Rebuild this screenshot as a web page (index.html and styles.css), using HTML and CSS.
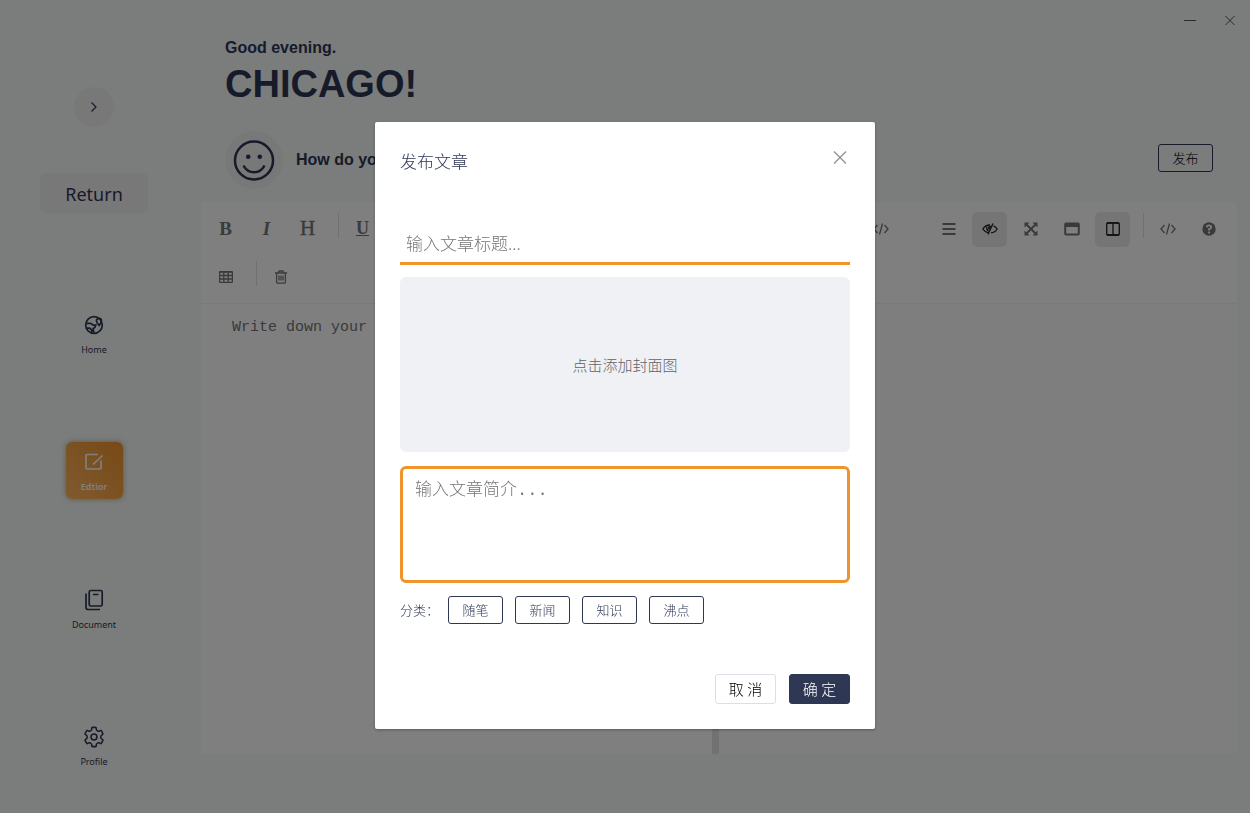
FILE: index.html
```html
<!DOCTYPE html>
<html lang="zh-CN">
<head>
<meta charset="utf-8">
<title>Editor</title>
<link rel="stylesheet" href="styles.css">
</head>
<body>
<div class="app">
  <aside class="sidebar">
    <button class="collapse" aria-label="Expand"><svg width="8" height="12" viewBox="0 0 8 12"><path d="M1.500 1.500L6 6L1.500 10.500"/></svg></button>
    <button class="return">Return</button>
    <nav class="nav">
      <a class="nav-item" href="#home">
        <svg width="20" height="20" viewBox="0 0 20 20"><circle cx="10" cy="10" r="8.300"/><path d="M2 8.300h4.800l2.400 1.900h2.600l-.9 2.300-1.700 1 .6 4.200M2.200 13.200h3.500l2 1.800.2 2.500"/><path d="M15.200 10.500Q12.400 7.500 12.400 5.800A2.500 2.500 0 0 1 17.400 5.800Q17.400 7.500 15.200 10.500z"/></svg>
        <span>Home</span>
      </a>
      <a class="nav-item active" href="#editor">
        <svg width="20" height="20" viewBox="0 0 20 20"><path d="M14 2.500H3.200Q2 2.500 2 3.700v12.100Q2 17 3.200 17h12.600q1.200 0 1.200-1.200V8.500M9 12.500L18.500 3.500"/></svg>
        <span>Edtior</span>
      </a>
      <a class="nav-item" href="#document">
        <svg class="tall" width="20" height="22" viewBox="0 0 20 22"><rect x="5.200" y="1.500" width="13" height="15.500" rx="1.500"/><path d="M9 5.500h5.500M2 4.500v13.500q0 2.500 2 2.500h12"/></svg>
        <span>Document</span>
      </a>
      <a class="nav-item" href="#profile">
        <svg class="tall" width="22" height="22" viewBox="0 0 24 24"><circle cx="12" cy="12" r="3.200"/><path d="M9.500 2.500Q9.500 1.500 10.500 1.500h3q1 0 1 1v1q0 1 1 1.600l.6.4q1 .5 1.800 0l.8-.5q.9-.5 1.400.4l1.500 2.600q.5.900-.4 1.400l-.8.500q-.9.600-.9 1.600v1q0 1 .9 1.600l.8.500q.9.500.4 1.400l-1.500 2.600q-.5.900-1.400.4l-.8-.5q-.8-.5-1.800 0l-.6.400q-1 .6-1 1.600v1q0 1-1 1h-3q-1 0-1-1v-1q0-1-1-1.600l-.6-.4q-1-.5-1.800 0l-.8.500q-.9.500-1.400-.4l-1.500-2.600q-.5-.9.400-1.400l.8-.5q.9-.6.9-1.600v-1q0-1-.9-1.600l-.8-.5q-.9-.5-.4-1.400l1.500-2.600q.5-.9 1.400-.4l.8.500q.8.500 1.800 0l.6-.4q1-.6 1-1.600z"/></svg>
        <span>Profile</span>
      </a>
    </nav>
  </aside>

  <main class="main">
    <div class="window-bar">
      <button aria-label="Minimize"><svg width="12" height="12" viewBox="0 0 12 12"><path d="M0 6.500h12"/></svg></button>
      <button aria-label="Close window"><svg width="12" height="12" viewBox="0 0 12 12"><path d="M1.500 2l9 9M10.500 2l-9 9"/></svg></button>
    </div>
    <header class="greeting">
      <p>Good evening.</p>
      <h1>CHICAGO!</h1>
    </header>
    <div class="mood">
      <span class="face"><svg width="42" height="42" viewBox="0 0 42 42"><circle cx="21" cy="21.500" r="19"/><circle class="dot" cx="15.200" cy="17.800" r="2.300"/><circle class="dot" cx="26.800" cy="17.800" r="2.300"/><path d="M10.500 26.500C15 35.500 27 35.500 31.500 26.500"/></svg></span>
      <h2>How do yo</h2>
      <button class="tag publish">发布</button>
    </div>

    <section class="editor">
      <div class="toolbar">
        <div class="tool-row">
          <button class="tool bold">B</button>
          <button class="tool italic">I</button>
          <button class="tool heading">H</button>
          <span class="divider"></span>
          <button class="tool underline">U</button>
          <button class="tool push" aria-label="Code"><svg width="16" height="12" viewBox="0 0 16 12"><path d="M4.500 2L1 6l3.500 4M11.500 2L15 6l-3.500 4M9.500 0.500L6.500 11.500"/></svg></button>
          <div class="tool-group">
            <button class="tool" aria-label="Outline"><svg width="14" height="12" viewBox="0 0 14 12"><path class="thick" d="M0.500 1h13M0.500 6h13M0.500 11h13"/></svg></button>
            <button class="tool on" aria-label="Preview"><svg width="16" height="12" viewBox="0 0 16 12"><path d="M6.500 9.800C4 9.300 2 8 0.800 6 2.500 3.300 5 2 8 2M11.500 2.800C13.200 3.500 14.400 4.700 15.200 6 13.800 8.300 11.500 9.700 9 9.900M11 0.500L6 11.500M4.800 4Q4.500 7 6.500 8"/><path class="solid" d="M6.200 3.500L9.300 2.500 7.300 7Q5.500 6 6.200 3.500z"/></svg></button>
            <button class="tool" aria-label="Fullscreen"><svg width="14" height="14" viewBox="0 0 14 14"><path class="thick" d="M2 2l10 10M12 2L2 12"/><path class="solid" d="M0.500 0.500H5.500L0.500 5.500zM13.500 0.500V5.500L8.500 0.500zM0.500 13.500V8.500L5.500 13.500zM13.500 13.500H8.500L13.500 8.500z"/></svg></button>
            <button class="tool" aria-label="Read"><svg width="16" height="14" viewBox="0 0 16 14"><rect class="thick" x="1.200" y="1.500" width="13.600" height="11" rx="0.800"/><path class="solid" d="M1 1h14v4H1z"/></svg></button>
            <button class="tool on" aria-label="Split view"><svg width="14" height="14" viewBox="0 0 14 14"><rect x="0.700" y="1" width="12.600" height="12" rx="1"/><path d="M7 1v12M1 1h12M1 13h12"/></svg></button>
            <span class="divider"></span>
            <button class="tool" aria-label="HTML source"><svg width="16" height="12" viewBox="0 0 16 12"><path d="M4.500 2L1 6l3.500 4M11.500 2L15 6l-3.500 4M9.500 0.500L6.500 11.500"/></svg></button>
            <button class="tool" aria-label="Help"><svg width="14" height="14" viewBox="0 0 14 14"><circle class="solid" cx="7" cy="7" r="6.700"/><path class="mark" d="M4.800 5.300Q5 3.300 7 3.300t2.200 1.900Q9.200 6.500 7.100 7.200V8.500M7.100 9.500v2"/></svg></button>
          </div>
        </div>
        <div class="tool-row">
          <button class="tool" aria-label="Table"><svg width="14" height="12" viewBox="0 0 14 12"><rect x="0.600" y="0.600" width="12.800" height="10.800" rx="1"/><path d="M0.500 1h13M0.500 4.500h13M0.500 8h13M4.800 1v10M9.200 1v10"/></svg></button>
          <span class="divider"></span>
          <button class="tool" aria-label="Delete"><svg width="12" height="14" viewBox="0 0 12 14"><path d="M0 3h12M3.500 3V2Q3.500 1 4.500 1h3q1 0 1 1v1M1.600 3v9q0 1.200 1.200 1.200h6.400q1.200 0 1.200-1.200V3M4 5.500v5M6 5.500v5M8 5.500v5"/></svg></button>
        </div>
      </div>
      <div class="panes">
        <textarea class="source" aria-label="Article body" placeholder="Write down your"></textarea>
        <div class="preview"></div>
      </div>
    </section>
  </main>
</div>

<div class="overlay">
  <form class="dialog" role="dialog" aria-labelledby="dialog-title">
    <header class="dialog-head">
      <h2 id="dialog-title">发布文章</h2>
      <button type="button" class="close" aria-label="Close"><svg width="14" height="14" viewBox="0 0 14 14"><path d="M1 1.500l12 12M13 1.500L1 13.500"/></svg></button>
    </header>
    <input class="title-input" type="text" aria-label="文章标题" placeholder="输入文章标题...">
    <button type="button" class="cover">点击添加封面图</button>
    <textarea class="summary" aria-label="文章简介" placeholder="输入文章简介..."></textarea>
    <div class="tags">
      <span class="tags-label">分类：</span>
      <button type="button" class="tag">随笔</button>
      <button type="button" class="tag">新闻</button>
      <button type="button" class="tag">知识</button>
      <button type="button" class="tag">沸点</button>
    </div>
    <footer class="actions">
      <button type="button" class="action">取 消</button>
      <button type="submit" class="action primary">确 定</button>
    </footer>
  </form>
</div>
</body>
</html>
```
FILE: styles.css
```css
:root {
  --navy: #2e3753;
  --orange: #f0932b;
  --sans: "Liberation Sans", "Noto Sans CJK SC", sans-serif;
  --ui: "Noto Sans", "Noto Sans CJK SC", sans-serif;
  --cjk: "Noto Sans CJK SC", sans-serif;
}

* { box-sizing: border-box; }

body {
  margin: 0;
  font-family: var(--sans);
  color: var(--navy);
  background: #f5faf8;
}

h1, h2, p { margin: 0; }

button {
  padding: 0;
  border: 0;
  background: none;
  color: inherit;
  font: inherit;
}

svg {
  display: block;
  fill: none;
  stroke: currentColor;
}

textarea { resize: none; }
input:focus, textarea:focus { outline: none; }

.app {
  display: flex;
  height: 100vh;
  overflow: hidden;
}

/* Sidebar */
.sidebar {
  display: flex;
  flex-direction: column;
  align-items: center;
  flex: none;
  width: 188px;
  padding-top: 87px;
  font-family: var(--ui);
}

.collapse {
  display: grid;
  place-items: center;
  width: 40px;
  height: 40px;
  border-radius: 50%;
  background: #f3f0f2;
}

.collapse svg { stroke-width: 1.2; }

.return {
  width: 108px;
  height: 40px;
  margin-top: 46px;
  padding-top: 2px;
  border-radius: 5px;
  background: #f3f0f2;
  font-size: 18px;
}

.nav {
  display: flex;
  flex-direction: column;
  gap: 80px;
  margin-top: 92px;
}

.nav-item {
  display: flex;
  flex-direction: column;
  align-items: center;
  gap: 9px;
  width: 57px;
  height: 57px;
  padding-top: 10px;
  border-radius: 6px;
  color: var(--navy);
  font-size: 9px;
  line-height: 12px;
  text-decoration: none;
}

.nav-item svg { stroke-width: 1.7; }
.nav-item .tall { margin-bottom: -1px; }

.nav-item.active {
  background: linear-gradient(225deg, #f0932b, #ffb560);
  box-shadow: 0 0 5px rgba(120, 80, 20, .5);
  color: #fff;
  font-weight: 600;
}

/* Main column */
.main {
  display: flex;
  flex-direction: column;
  flex: 1;
  min-width: 0;
  padding: 0 13px 59px;
}

.window-bar {
  display: flex;
  justify-content: flex-end;
  gap: 28px;
  height: 38px;
  padding-top: 14px;
  color: #555;
}

.window-bar button { height: 12px; }
.window-bar button:last-child { margin-right: 1px; }

.greeting { padding-left: 24px; }

.greeting p {
  font-size: 16px;
  font-weight: 700;
  line-height: 20px;
}

.greeting h1 {
  font-size: 38px;
  line-height: 52px;
}

.mood {
  display: flex;
  align-items: center;
  height: 58px;
  margin: 21px 24px 13px;
}

.mood h2 {
  margin-left: 13px;
  font-size: 16px;
}

.face {
  display: grid;
  place-items: center;
  width: 58px;
  height: 58px;
  border-radius: 50%;
  background: #f3f0f2;
}

.face svg { stroke-width: 2.5; }
.face .dot { fill: currentColor; stroke: none; }

.tag {
  width: 55px;
  height: 28px;
  border: 1px solid var(--navy);
  border-radius: 3px;
  font-family: var(--cjk);
  font-size: 13px;
  font-weight: 300;
  line-height: 20px;
}

.publish {
  margin-bottom: 4px;
  margin-left: auto;
  color: #000;
}

/* Editor */
.editor {
  display: flex;
  flex-direction: column;
  flex: 1;
  min-height: 0;
  overflow: hidden;
  border-radius: 4px;
  background: #fff;
}

.toolbar {
  display: flex;
  flex-direction: column;
  gap: 13px;
  padding: 10px 11px 8px 7px;
  border-bottom: 1px solid #f2f2f2;
  color: #757575;
}

.tool-row, .tool-group {
  display: flex;
  gap: 6px;
}

.tool-group { margin-left: 27px; }

.tool {
  display: grid;
  place-items: center;
  width: 35px;
  height: 35px;
  padding-bottom: 1px;
  border-radius: 5px;
  font-family: "Liberation Serif", serif;
  font-size: 19px;
}

.tool svg { stroke-width: 1.3; }
.tool .thick { stroke-width: 2; }
.tool .solid { fill: currentColor; stroke: none; }
.tool .mark { stroke: #fff; stroke-width: 1.8; }
.tool.push { margin-left: auto; }
.tool.bold, .tool.italic { font-weight: 700; }
.tool.italic { font-style: italic; }
.tool.heading { font-size: 21px; -webkit-text-stroke: 0.4px; padding-bottom: 3px; }
.tool.underline { text-decoration: underline; font-size: 18px; font-weight: 700; padding-bottom: 3px; }

.tool.on {
  background: #eaeaea;
  color: #222;
}

.divider {
  width: 1px;
  height: 25px;
  margin: 1px 0 0 7px;
  background: #e0e0e0;
}

.panes {
  display: grid;
  grid-template-columns: 1fr 1fr;
  flex: 1;
}

.source {
  width: 100%;
  height: 100%;
  padding: 13px 31px;
  border: 0;
  border-right: 7px solid #e4e4e4;
  background: none;
  font-family: "Liberation Mono", monospace;
  font-size: 15px;
  line-height: 22px;
}

.preview { background: #fdfdfd; }

::placeholder {
  color: #757575;
  opacity: 1;
}

/* Publish dialog */
.overlay {
  position: fixed;
  inset: 0;
  display: flex;
  justify-content: center;
  align-items: flex-start;
  padding-top: 15vh;
  background: rgba(0, 0, 0, .5);
}

.dialog {
  display: flex;
  flex-direction: column;
  width: 500px;
  padding: 25px;
  border-radius: 2px;
  background: #fff;
  box-shadow: 0 1px 3px rgba(0, 0, 0, .3);
  font-family: var(--cjk);
  font-weight: 300;
}

.dialog-head {
  display: flex;
  justify-content: space-between;
  align-items: flex-start;
  margin-bottom: 48px;
}

.dialog-head h2 {
  font-size: 17px;
  font-weight: 300;
  line-height: 28px;
}

.close {
  padding: 3px;
  color: #909399;
}

.close svg { stroke-width: 1.4; }

.title-input {
  height: 42px;
  margin-bottom: 12px;
  padding: 0 6px;
  border: 0;
  border-bottom: 3px solid var(--orange);
  font: 300 17px/24px var(--cjk);
}

.cover {
  height: 175px;
  margin-bottom: 14px;
  border-radius: 6px;
  background: #f0f1f5;
  color: #606266;
  font-size: 15px;
}

.summary {
  height: 117px;
  margin-bottom: 13px;
  padding: 10px 12px;
  border: 3px solid var(--orange);
  border-radius: 6px;
  font: 300 17px/24px "Liberation Mono", "Noto Sans CJK SC", monospace;
}

.tags {
  display: flex;
  align-items: center;
  gap: 12px;
  margin-bottom: 50px;
}

.tags-label {
  width: 36px;
  font-family: "Noto Sans CJK TC", sans-serif;
  font-size: 13px;
  white-space: nowrap;
}

.actions {
  display: flex;
  justify-content: flex-end;
  gap: 13px;
}

.action {
  width: 61px;
  height: 30px;
  border: 1px solid #dcdfe6;
  border-radius: 3px;
  color: #000;
  font-size: 15px;
  line-height: 20px;
}

.action.primary {
  border-color: var(--navy);
  background: var(--navy);
  color: #fff;
}
```
